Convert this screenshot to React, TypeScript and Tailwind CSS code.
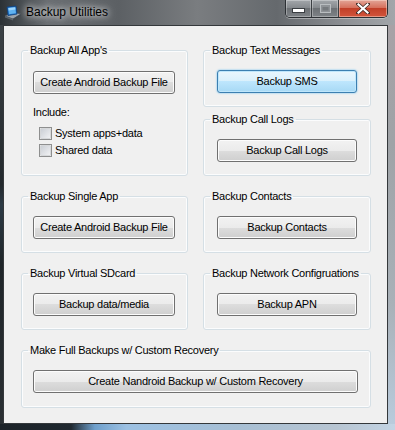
import React from "react";

const btn =
  "h-[23px] w-full rounded-[3px] border border-[#707070] bg-[linear-gradient(to_bottom,#f2f2f2_0%,#ebebeb_50%,#dddddd_50%,#cfcfcf_100%)] shadow-[inset_0_0_0_1px_#fcfcfc] text-[11px] leading-[15px] tracking-[-0.25px] text-black";

const focusedBtn =
  "h-[23px] w-full rounded-[3px] border border-[#3c7fb1] bg-[linear-gradient(to_bottom,#eaf6fd_0%,#d9f0fc_50%,#bee6fd_50%,#a7d9f5_100%)] shadow-[inset_0_0_0_1px_#bfe6fb,0_0_2px_#59b8ef] text-[11px] leading-[15px] tracking-[-0.25px] text-black";

function Group({
  title,
  children,
  className = "",
  inner = "",
}: {
  title: string;
  children: React.ReactNode;
  className?: string;
  inner?: string;
}) {
  return (
    <fieldset
      className={`m-0 min-w-0 rounded-[3px] border border-[#d5dfe5] p-0 shadow-[inset_0_0_0_1px_#fbfcfd] ${className}`}
    >
      <legend className="ml-[6px] whitespace-nowrap px-[2px] text-[11px] leading-[15px] tracking-[-0.25px] text-black">
        {title}
      </legend>
      <div className={inner}>{children}</div>
    </fieldset>
  );
}

function Checkbox({ label }: { label: string }) {
  return (
    <label className="flex h-[15px] items-center gap-[3px] text-[11px] leading-[15px] tracking-[-0.25px]">
      <span className="flex h-[13px] w-[13px] items-center justify-center border border-[#8e8f8f] bg-[#f4f4f4]">
        <span className="h-[9px] w-[9px] bg-[linear-gradient(135deg,#cbcfd5,#f0f1f3)] shadow-[0_0_0_0.5px_#b9bcc0]" />
      </span>
      {label}
    </label>
  );
}

function AppIcon() {
  return (
    <svg width="18" height="16" viewBox="0 0 18 16">
      <path d="M1 11 L9 14 L17 9 L9 7 Z" fill="#9aa3ab" stroke="#4a5158" strokeWidth="0.8" />
      <path d="M1 11 L1 12.5 L9 15.5 L9 14 Z" fill="#5d656c" />
      <path d="M9 14 L17 9 L17 10.5 L9 15.5 Z" fill="#3f464c" />
      <path d="M3 2 L12 1 L13 9 L4 10.5 Z" fill="#1d6fc4" stroke="#0f3f78" strokeWidth="0.8" />
      <path d="M4.3 3 L11.2 2.2 L12 8.2 L5 9.3 Z" fill="#5fb2f0" />
      <path d="M4.3 3 L11.2 2.2 L11.5 4.5 L4.6 5.6 Z" fill="#a9dcff" opacity="0.8" />
    </svg>
  );
}

function WindowControls() {
  return (
    <div className="mr-[7px] flex h-[18px] self-start overflow-hidden rounded-b-[5px] border border-t-0 border-[#2c3034] shadow-[0_1px_0_rgba(255,255,255,0.35)]">
      <div className="flex w-[26px] items-center justify-center border-r border-[#3b3f43] bg-[linear-gradient(to_bottom,#a3a7ab_0%,#868a8e_45%,#6c7074_50%,#7e8286_100%)] shadow-[inset_0_0_0_1px_rgba(255,255,255,0.3)]">
        <svg width="13" height="6" viewBox="0 0 13 6" className="mt-[5px]">
          <rect x="0.5" y="0.5" width="12" height="4" fill="#ffffff" stroke="#3a3e42" strokeWidth="1" />
        </svg>
      </div>
      <div className="flex w-[27px] items-center justify-center border-r border-[#3b3f43] bg-[linear-gradient(to_bottom,#a3a7ab_0%,#868a8e_45%,#6c7074_50%,#7e8286_100%)] shadow-[inset_0_0_0_1px_rgba(255,255,255,0.3)]">
        <svg width="11" height="9" viewBox="0 0 11 9">
          <rect x="0.5" y="0.5" width="10" height="8" fill="#8e9296" stroke="#b9bdc0" strokeWidth="1" />
          <rect x="2.5" y="3" width="6" height="3.5" fill="#75797d" />
        </svg>
      </div>
      <div className="flex w-[48px] items-center justify-center bg-[linear-gradient(to_bottom,#e3a597_0%,#d6715d_45%,#c13f28_50%,#d2553c_100%)] shadow-[inset_0_0_0_1px_rgba(255,230,220,0.45)]">
        <svg width="14" height="11" viewBox="0 0 14 11">
          <path
            d="M2 1 L12 10 M12 1 L2 10"
            stroke="#3d2a26"
            strokeWidth="3.6"
            strokeLinecap="square"
            fill="none"
          />
          <path
            d="M2.5 1.5 L11.5 9.5 M11.5 1.5 L2.5 9.5"
            stroke="#ffffff"
            strokeWidth="2.2"
            strokeLinecap="square"
            fill="none"
          />
        </svg>
      </div>
    </div>
  );
}

export default function App() {
  return (
    <div className="flex h-[430px] w-[395px] flex-col overflow-hidden bg-[linear-gradient(to_right,#2b3135_0%,#6a6e72_12%,#5c6064_30%,#7a7d80_50%,#65696d_70%,#8e9195_88%,#a2a6aa_100%)] font-['Liberation_Sans',Arial,sans-serif]">
      {/* title bar */}
      <div className="flex h-[25px] shrink-0">
        <div className="flex items-center pl-[4px]">
          <AppIcon />
          <span className="ml-[4px] text-[12px] leading-[15px] text-black [text-shadow:0_0_6px_rgba(255,255,255,0.95),0_0_10px_rgba(255,255,255,0.7)]">
            Backup Utilities
          </span>
        </div>
        <div className="ml-auto flex">
          <WindowControls />
        </div>
      </div>

      <div className="flex h-[399px] shrink-0">
        <div className="w-[3px] bg-[linear-gradient(to_bottom,#3b4145,#23292d_40%,#2c3a45_45%,#1f2529_60%,#2a2f33)]" />
        {/* client area */}
        <div className="w-[385px] border border-[#34383b] bg-[#f0f0f0] pl-[17px] pt-[17px] text-black">
          <div className="grid grid-cols-[167px_168px] gap-x-[15px] gap-y-[13px]">
            <Group title="Backup All App's" className="h-[133px]" inner="pl-[11px] pr-[12px] pt-[11px]">
              <button className={btn}>Create Android Backup File</button>
              <div className="mt-[11px] text-[11px] leading-[15px] tracking-[-0.25px]">Include:</div>
              <div className="ml-[6px] mt-[6px] flex flex-col gap-[2px]">
                <Checkbox label="System apps+data" />
                <Checkbox label="Shared data" />
              </div>
            </Group>

            <div className="flex flex-col gap-[5px]">
              <Group title="Backup Text Messages" className="h-[64px]" inner="px-[13px] pt-[10px]">
                <button className={focusedBtn}>Backup SMS</button>
              </Group>
              <Group title="Backup Call Logs" className="h-[64px]" inner="px-[13px] pt-[10px]">
                <button className={btn}>Backup Call Logs</button>
              </Group>
            </div>

            <Group title="Backup Single App" className="h-[64px]" inner="pl-[11px] pr-[12px] pt-[10px]">
              <button className={btn}>Create Android Backup File</button>
            </Group>
            <Group title="Backup Contacts" className="h-[64px]" inner="px-[13px] pt-[10px]">
              <button className={btn}>Backup Contacts</button>
            </Group>

            <Group title="Backup Virtual SDcard" className="h-[64px]" inner="pl-[11px] pr-[12px] pt-[10px]">
              <button className={btn}>Backup data/media</button>
            </Group>
            <Group title="Backup Network Configruations" className="h-[64px]" inner="px-[13px] pt-[10px]">
              <button className={btn}>Backup APN</button>
            </Group>

            <Group
              title="Make Full Backups w/ Custom Recovery"
              className="col-span-2 h-[65px]"
              inner="pl-[11px] pr-[12px] pt-[10px]"
            >
              <button className={btn}>Create Nandroid Backup w/ Custom Recovery</button>
            </Group>
          </div>
        </div>
        <div className="flex-1 bg-[linear-gradient(to_bottom,#a7a2a6,#9fa3a7_30%,#a9b1b8_70%,#b9cbdc)]" />
      </div>

      {/* bottom frame */}
      <div className="h-[6px] shrink-0 bg-[linear-gradient(to_right,#1b2228_0%,#202930_18%,#6e9fcb_24%,#9cc1e3_32%,#a7bfd4_60%,#b7c5d2_85%,#c3d4e4_100%)]" />
    </div>
  );
}
